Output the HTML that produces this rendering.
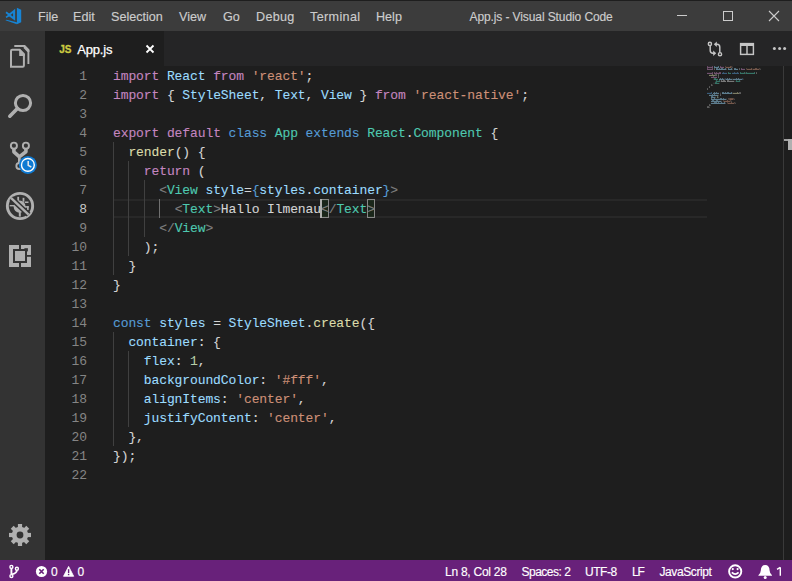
<!DOCTYPE html>
<html><head><meta charset="utf-8">
<style>
*{margin:0;padding:0;box-sizing:border-box}
html,body{width:792px;height:581px;overflow:hidden;background:#1e1e1e;font-family:"Liberation Sans",sans-serif}
#title{position:absolute;left:0;top:0;width:792px;height:31px;background:#3c3c3c;border-top:1px solid #1e1e1e}
.menu{position:absolute;top:8.5px;font-size:12.6px;color:#cccccc;line-height:15px;white-space:nowrap;-webkit-text-stroke:0.15px #cccccc}
#wtitle{position:absolute;top:8.5px;left:469.5px;font-size:12px;letter-spacing:-0.1px;color:#cccccc;line-height:15px;white-space:nowrap;-webkit-text-stroke:0.15px #cccccc}
#act{position:absolute;left:0;top:31px;width:45px;height:529px;background:#333333}
#tabs{position:absolute;left:45px;top:31px;width:747px;height:35px;background:#252526}
#tab{position:absolute;left:45px;top:31px;width:119px;height:35px;background:#1e1e1e}
#status{position:absolute;left:0;top:560px;width:792px;height:21px;background:#68217a;color:#fff;font-size:12px}
.st{position:absolute;top:4.5px;line-height:15px;white-space:nowrap;-webkit-text-stroke:0.15px #ffffff}
.ln{position:absolute;left:113px;height:19px;line-height:19px;font-family:"Liberation Mono",monospace;font-size:13px;letter-spacing:-0.1px;white-space:pre;color:#d4d4d4;-webkit-text-stroke:0.1px currentColor}
.num{position:absolute;left:50px;width:37px;text-align:right;height:19px;line-height:19px;font-family:"Liberation Mono",monospace;font-size:13px;letter-spacing:-0.1px;color:#858585}
.num.act{color:#c6c6c6}
.guide{position:absolute;width:1px}
#curline{position:absolute;left:113px;top:199px;width:594px;height:19px;border-top:2px solid #282828;border-bottom:2px solid #282828}
#cursor{position:absolute;left:320px;top:199px;width:2px;height:19px;background:#aeafad}
.bm{position:absolute;top:199px;width:9px;height:19px;border:1px solid #888888;background:rgba(0,100,0,0.12)}
</style></head><body>
<div id="title">
  <svg style="position:absolute;left:0;top:-1px" width="30" height="31" viewBox="0 0 30 31">
    <path fill="#1784d4" d="M16.9 7.8 L21.2 9.7 V22.3 L16.9 24.2 Z"/>
    <path fill="#1784d4" d="M5.4 20.3 L6.6 19.8 L16.9 22.3 V24.2 Z"/>
    <path fill="none" stroke="#1784d4" stroke-width="2.1" stroke-linejoin="miter" d="M14.1 11 L9 15 L14.1 18.7 Z"/>
    <path fill="none" stroke="#1784d4" stroke-width="1.7" d="M6 12.2 L9.4 14.8 M6 17.4 L9.4 15.2"/>
  </svg>
  <div class="menu" style="left:38px">File</div>
  <div class="menu" style="left:73px">Edit</div>
  <div class="menu" style="left:111px">Selection</div>
  <div class="menu" style="left:179px">View</div>
  <div class="menu" style="left:223px">Go</div>
  <div class="menu" style="left:256px;letter-spacing:0.3px">Debug</div>
  <div class="menu" style="left:310px;letter-spacing:0.35px">Terminal</div>
  <div class="menu" style="left:376px">Help</div>
  <div id="wtitle">App.js - Visual Studio Code</div>
  <svg style="position:absolute;left:0;top:-1px" width="792" height="31" viewBox="0 0 792 31">
    <rect x="677" y="15" width="10" height="1" fill="#cccccc"/>
    <rect x="723.5" y="11.5" width="9" height="9" fill="none" stroke="#cccccc" stroke-width="1"/>
    <path d="M769 11 L779 21 M779 11 L769 21" stroke="#cccccc" stroke-width="1.1"/>
  </svg>
</div>
<div id="act"></div>
<svg style="position:absolute;left:0;top:0" width="45" height="560" viewBox="0 0 45 560">
  <g fill="none" stroke="#b0b0b0">
    <!-- explorer -->
    <path d="M14.3 46 H24.5 L28.4 50 V64" stroke-width="1.9"/>
    <path d="M11 66.8 V51 Q11 49.8 12.2 49.8 H19.6 L23.9 54.2 V65.6 Q23.9 66.8 22.7 66.8 Z" stroke-width="2"/>
    <!-- search -->
    <circle cx="23" cy="103" r="7.6" stroke-width="3"/>
    <path d="M17.4 108.6 L9.8 116.2" stroke-width="3.6" stroke-linecap="round"/>
    <!-- git -->
    <circle cx="13.9" cy="145.7" r="3.05" stroke-width="1.9"/>
    <circle cx="25.9" cy="145.7" r="3.05" stroke-width="1.9"/>
    <circle cx="19.4" cy="166" r="3.05" stroke-width="1.9"/>
    <path d="M13.9 148.8 V151.8 L19.2 156.6 M25.9 148.8 V151.8 L19.6 156.6" stroke-width="3.6" stroke-linejoin="round"/>
    <path d="M19.4 155 V163" stroke-width="2.8"/>
    <!-- debug -->
    <circle cx="20" cy="206" r="12.65" stroke-width="2.9"/>
  </g>
  <path fill="#b0b0b0" d="M19.2 49.4 H20.4 L24.8 54.2 V56 H19.2 Z"/>
  <path fill="#b0b0b0" d="M24.6 45 L29.4 50 V52 L27.4 52 L23.5 47.9 Z"/>
  <!-- badge -->
  <circle cx="27.9" cy="164.9" r="9" fill="#0e7ad3"/>
  <circle cx="27.9" cy="164.9" r="6.4" fill="none" stroke="#ffffff" stroke-width="1.4"/>
  <path d="M28.2 161 V165.4 L31.3 167" fill="none" stroke="#e8e8e8" stroke-width="1.5"/>
  <!-- debug bug -->
  <g fill="#b0b0b0">
    <ellipse cx="19.6" cy="206.6" rx="6" ry="6.2"/>
    <rect x="17.3" y="196.8" width="1.8" height="4"/>
    <rect x="22.6" y="197.8" width="1.8" height="4"/>
    <rect x="25" y="201.5" width="3.5" height="1.5"/>
    <rect x="24" y="206.1" width="4.7" height="1.6"/>
    <rect x="27" y="206.1" width="1.7" height="4"/>
    <rect x="9.7" y="205" width="5" height="1.4"/>
    <rect x="18.8" y="211.6" width="2" height="5"/>
  </g>
  <path d="M11.2 198.2 L28.6 214.6" stroke="#333333" stroke-width="5.4"/>
  <path d="M11.2 198.2 L28.6 214.6" stroke="#b0b0b0" stroke-width="2.4"/>
  <!-- extensions -->
  <rect x="9" y="245" width="22" height="22" fill="#b0b0b0"/>
  <g fill="#333333">
    <rect x="19" y="245" width="2" height="4"/>
    <rect x="19" y="263" width="2" height="4"/>
    <rect x="27" y="255" width="4" height="1.8"/>
    <rect x="13" y="249" width="14" height="14"/>
    <rect x="24.4" y="248.2" width="3.5" height="3.2"/>
  </g>
  <rect x="15" y="251" width="10" height="10" fill="#b0b0b0"/>
  <!-- gear -->
  <g fill="#b0b0b0" transform="translate(20 535)">
    <circle r="8.2"/>
    <rect x="-2.1" y="-11" width="4.2" height="22"/>
    <rect x="-2.1" y="-11" width="4.2" height="22" transform="rotate(45)"/>
    <rect x="-2.1" y="-11" width="4.2" height="22" transform="rotate(90)"/>
    <rect x="-2.1" y="-11" width="4.2" height="22" transform="rotate(135)"/>
    <circle r="3.4" fill="#333333"/>
  </g>
</svg>
<div id="tabs"></div>
<div id="tab">
  <div style="position:absolute;left:14.3px;top:13px;font-weight:bold;font-size:10px;color:#cbcb41;letter-spacing:-0.2px;line-height:12px;-webkit-text-stroke:0.3px #cbcb41">JS</div>
  <div style="position:absolute;left:32.3px;top:10.7px;font-size:13px;color:#ffffff;line-height:15px;letter-spacing:-0.2px;-webkit-text-stroke:0.25px #ffffff">App.js</div>
  <svg style="position:absolute;left:100px;top:13px" width="10" height="10" viewBox="0 0 10 10"><path d="M1.5 1.5 L8.5 8.5 M8.5 1.5 L1.5 8.5" stroke="#ffffff" stroke-width="1.8"/></svg>
</div>
<svg style="position:absolute;left:0;top:0" width="792" height="66" viewBox="0 0 792 66">
  <g fill="none" stroke="#c5c5c5" stroke-width="1.45">
    <circle cx="709.9" cy="43.9" r="1.6"/>
    <circle cx="720" cy="54.2" r="1.6"/>
    <path d="M710.2 45.5 V50.5 Q710.2 53.2 713 53.2 H714.5"/>
    <path d="M719.8 52.6 V47 Q719.8 44.2 717 44.2 H716"/>
    <rect x="740.6" y="43.6" width="12.8" height="10.8"/>
    <path d="M747 44 V54"/>
  </g>
  <path d="M713.2 50.6 L716.2 53.3 L713.2 56 Z" fill="#c5c5c5"/>
  <path d="M716.8 41.5 L713.8 44.2 L716.8 46.9 Z" fill="#c5c5c5"/>
  <rect x="740" y="43" width="14" height="3" fill="#c5c5c5"/>
  <circle cx="774.4" cy="48.4" r="1.5" fill="#c5c5c5"/>
  <circle cx="779.6" cy="48.4" r="1.5" fill="#c5c5c5"/>
  <circle cx="784.6" cy="48.4" r="1.5" fill="#c5c5c5"/>
</svg>
<div id="curline"></div>
<div class="bm" style="left:320px"></div>
<div class="bm" style="left:367px;width:8px"></div>
<div class="guide" style="left:113px;top:142px;height:133px;background:#404040"></div>
<div class="guide" style="left:128px;top:161px;height:95px;background:#404040"></div>
<div class="guide" style="left:144px;top:180px;height:57px;background:#404040"></div>
<div class="guide" style="left:159px;top:199px;height:19px;background:#707070"></div>
<div class="guide" style="left:113px;top:332px;height:114px;background:#404040"></div>
<div class="guide" style="left:128px;top:351px;height:76px;background:#404040"></div>
<div class="ln" style="top:67px"><span style="color:#c586c0">import</span><span style="color:#d4d4d4"> </span><span style="color:#9cdcfe">React</span><span style="color:#d4d4d4"> </span><span style="color:#c586c0">from</span><span style="color:#d4d4d4"> </span><span style="color:#ce9178">&#x27;react&#x27;</span><span style="color:#d4d4d4">;</span></div>
<div class="num" style="top:67px">1</div>
<div class="ln" style="top:86px"><span style="color:#c586c0">import</span><span style="color:#d4d4d4"> { </span><span style="color:#9cdcfe">StyleSheet</span><span style="color:#d4d4d4">, </span><span style="color:#9cdcfe">Text</span><span style="color:#d4d4d4">, </span><span style="color:#9cdcfe">View</span><span style="color:#d4d4d4"> } </span><span style="color:#c586c0">from</span><span style="color:#d4d4d4"> </span><span style="color:#ce9178">&#x27;react-native&#x27;</span><span style="color:#d4d4d4">;</span></div>
<div class="num" style="top:86px">2</div>
<div class="ln" style="top:105px"></div>
<div class="num" style="top:105px">3</div>
<div class="ln" style="top:124px"><span style="color:#c586c0">export</span><span style="color:#d4d4d4"> </span><span style="color:#c586c0">default</span><span style="color:#d4d4d4"> </span><span style="color:#569cd6">class</span><span style="color:#d4d4d4"> </span><span style="color:#4ec9b0">App</span><span style="color:#d4d4d4"> </span><span style="color:#569cd6">extends</span><span style="color:#d4d4d4"> </span><span style="color:#4ec9b0">React</span><span style="color:#d4d4d4">.</span><span style="color:#4ec9b0">Component</span><span style="color:#d4d4d4"> {</span></div>
<div class="num" style="top:124px">4</div>
<div class="ln" style="top:143px"><span style="color:#d4d4d4">  </span><span style="color:#dcdcaa">render</span><span style="color:#d4d4d4">() {</span></div>
<div class="num" style="top:143px">5</div>
<div class="ln" style="top:162px"><span style="color:#d4d4d4">    </span><span style="color:#c586c0">return</span><span style="color:#d4d4d4"> (</span></div>
<div class="num" style="top:162px">6</div>
<div class="ln" style="top:181px"><span style="color:#d4d4d4">      </span><span style="color:#808080">&lt;</span><span style="color:#4ec9b0">View</span><span style="color:#d4d4d4"> </span><span style="color:#9cdcfe">style</span><span style="color:#d4d4d4">=</span><span style="color:#569cd6">{</span><span style="color:#9cdcfe">styles</span><span style="color:#d4d4d4">.</span><span style="color:#9cdcfe">container</span><span style="color:#569cd6">}</span><span style="color:#808080">&gt;</span></div>
<div class="num" style="top:181px">7</div>
<div class="ln" style="top:200px"><span style="color:#d4d4d4">        </span><span style="color:#808080">&lt;</span><span style="color:#4ec9b0">Text</span><span style="color:#808080">&gt;</span><span style="color:#d4d4d4">Hallo Ilmenau</span><span style="color:#808080">&lt;/</span><span style="color:#4ec9b0">Text</span><span style="color:#808080">&gt;</span></div>
<div class="num act" style="top:200px">8</div>
<div class="ln" style="top:219px"><span style="color:#d4d4d4">      </span><span style="color:#808080">&lt;/</span><span style="color:#4ec9b0">View</span><span style="color:#808080">&gt;</span></div>
<div class="num" style="top:219px">9</div>
<div class="ln" style="top:238px"><span style="color:#d4d4d4">    );</span></div>
<div class="num" style="top:238px">10</div>
<div class="ln" style="top:257px"><span style="color:#d4d4d4">  }</span></div>
<div class="num" style="top:257px">11</div>
<div class="ln" style="top:276px"><span style="color:#d4d4d4">}</span></div>
<div class="num" style="top:276px">12</div>
<div class="ln" style="top:295px"></div>
<div class="num" style="top:295px">13</div>
<div class="ln" style="top:314px"><span style="color:#569cd6">const</span><span style="color:#d4d4d4"> </span><span style="color:#9cdcfe">styles</span><span style="color:#d4d4d4"> = </span><span style="color:#9cdcfe">StyleSheet</span><span style="color:#d4d4d4">.</span><span style="color:#dcdcaa">create</span><span style="color:#d4d4d4">({</span></div>
<div class="num" style="top:314px">14</div>
<div class="ln" style="top:333px"><span style="color:#d4d4d4">  </span><span style="color:#9cdcfe">container</span><span style="color:#d4d4d4">: {</span></div>
<div class="num" style="top:333px">15</div>
<div class="ln" style="top:352px"><span style="color:#d4d4d4">    </span><span style="color:#9cdcfe">flex</span><span style="color:#d4d4d4">: </span><span style="color:#b5cea8">1</span><span style="color:#d4d4d4">,</span></div>
<div class="num" style="top:352px">16</div>
<div class="ln" style="top:371px"><span style="color:#d4d4d4">    </span><span style="color:#9cdcfe">backgroundColor</span><span style="color:#d4d4d4">: </span><span style="color:#ce9178">&#x27;#fff&#x27;</span><span style="color:#d4d4d4">,</span></div>
<div class="num" style="top:371px">17</div>
<div class="ln" style="top:390px"><span style="color:#d4d4d4">    </span><span style="color:#9cdcfe">alignItems</span><span style="color:#d4d4d4">: </span><span style="color:#ce9178">&#x27;center&#x27;</span><span style="color:#d4d4d4">,</span></div>
<div class="num" style="top:390px">18</div>
<div class="ln" style="top:409px"><span style="color:#d4d4d4">    </span><span style="color:#9cdcfe">justifyContent</span><span style="color:#d4d4d4">: </span><span style="color:#ce9178">&#x27;center&#x27;</span><span style="color:#d4d4d4">,</span></div>
<div class="num" style="top:409px">19</div>
<div class="ln" style="top:428px"><span style="color:#d4d4d4">  },</span></div>
<div class="num" style="top:428px">20</div>
<div class="ln" style="top:447px"><span style="color:#d4d4d4">});</span></div>
<div class="num" style="top:447px">21</div>
<div class="ln" style="top:466px"></div>
<div class="num" style="top:466px">22</div>
<svg class="mm" width="792" height="581" viewBox="0 0 792 581" style="position:absolute;left:0;top:0" shape-rendering="crispEdges"><rect x="707" y="66" width="1" height="1" fill="#c586c0" fill-opacity="0.42"/><rect x="707" y="67" width="1" height="1" fill="#c586c0" fill-opacity="0.50"/><rect x="708" y="66" width="1" height="1" fill="#c586c0" fill-opacity="0.08"/><rect x="708" y="67" width="1" height="1" fill="#c586c0" fill-opacity="0.50"/><rect x="709" y="66" width="1" height="1" fill="#c586c0" fill-opacity="0.08"/><rect x="709" y="67" width="1" height="1" fill="#c586c0" fill-opacity="0.50"/><rect x="710" y="66" width="1" height="1" fill="#c586c0" fill-opacity="0.08"/><rect x="710" y="67" width="1" height="1" fill="#c586c0" fill-opacity="0.50"/><rect x="711" y="66" width="1" height="1" fill="#c586c0" fill-opacity="0.08"/><rect x="711" y="67" width="1" height="1" fill="#c586c0" fill-opacity="0.50"/><rect x="712" y="66" width="1" height="1" fill="#c586c0" fill-opacity="0.42"/><rect x="712" y="67" width="1" height="1" fill="#c586c0" fill-opacity="0.50"/><rect x="714" y="66" width="1" height="1" fill="#9cdcfe" fill-opacity="0.42"/><rect x="714" y="67" width="1" height="1" fill="#9cdcfe" fill-opacity="0.50"/><rect x="715" y="66" width="1" height="1" fill="#9cdcfe" fill-opacity="0.08"/><rect x="715" y="67" width="1" height="1" fill="#9cdcfe" fill-opacity="0.50"/><rect x="716" y="66" width="1" height="1" fill="#9cdcfe" fill-opacity="0.08"/><rect x="716" y="67" width="1" height="1" fill="#9cdcfe" fill-opacity="0.50"/><rect x="717" y="66" width="1" height="1" fill="#9cdcfe" fill-opacity="0.08"/><rect x="717" y="67" width="1" height="1" fill="#9cdcfe" fill-opacity="0.50"/><rect x="718" y="66" width="1" height="1" fill="#9cdcfe" fill-opacity="0.42"/><rect x="718" y="67" width="1" height="1" fill="#9cdcfe" fill-opacity="0.50"/><rect x="720" y="66" width="1" height="1" fill="#c586c0" fill-opacity="0.42"/><rect x="720" y="67" width="1" height="1" fill="#c586c0" fill-opacity="0.50"/><rect x="721" y="66" width="1" height="1" fill="#c586c0" fill-opacity="0.08"/><rect x="721" y="67" width="1" height="1" fill="#c586c0" fill-opacity="0.50"/><rect x="722" y="66" width="1" height="1" fill="#c586c0" fill-opacity="0.08"/><rect x="722" y="67" width="1" height="1" fill="#c586c0" fill-opacity="0.50"/><rect x="723" y="66" width="1" height="1" fill="#c586c0" fill-opacity="0.08"/><rect x="723" y="67" width="1" height="1" fill="#c586c0" fill-opacity="0.50"/><rect x="725" y="66" width="1" height="1" fill="#ce9178" fill-opacity="0.30"/><rect x="725" y="67" width="1" height="1" fill="#ce9178" fill-opacity="0.22"/><rect x="726" y="66" width="1" height="1" fill="#ce9178" fill-opacity="0.08"/><rect x="726" y="67" width="1" height="1" fill="#ce9178" fill-opacity="0.50"/><rect x="727" y="66" width="1" height="1" fill="#ce9178" fill-opacity="0.08"/><rect x="727" y="67" width="1" height="1" fill="#ce9178" fill-opacity="0.50"/><rect x="728" y="66" width="1" height="1" fill="#ce9178" fill-opacity="0.08"/><rect x="728" y="67" width="1" height="1" fill="#ce9178" fill-opacity="0.50"/><rect x="729" y="66" width="1" height="1" fill="#ce9178" fill-opacity="0.08"/><rect x="729" y="67" width="1" height="1" fill="#ce9178" fill-opacity="0.50"/><rect x="730" y="66" width="1" height="1" fill="#ce9178" fill-opacity="0.42"/><rect x="730" y="67" width="1" height="1" fill="#ce9178" fill-opacity="0.50"/><rect x="731" y="66" width="1" height="1" fill="#ce9178" fill-opacity="0.30"/><rect x="731" y="67" width="1" height="1" fill="#ce9178" fill-opacity="0.22"/><rect x="732" y="66" width="1" height="1" fill="#d4d4d4" fill-opacity="0.08"/><rect x="732" y="67" width="1" height="1" fill="#d4d4d4" fill-opacity="0.22"/><rect x="707" y="68" width="1" height="1" fill="#c586c0" fill-opacity="0.42"/><rect x="707" y="69" width="1" height="1" fill="#c586c0" fill-opacity="0.50"/><rect x="708" y="68" width="1" height="1" fill="#c586c0" fill-opacity="0.08"/><rect x="708" y="69" width="1" height="1" fill="#c586c0" fill-opacity="0.50"/><rect x="709" y="68" width="1" height="1" fill="#c586c0" fill-opacity="0.08"/><rect x="709" y="69" width="1" height="1" fill="#c586c0" fill-opacity="0.50"/><rect x="710" y="68" width="1" height="1" fill="#c586c0" fill-opacity="0.08"/><rect x="710" y="69" width="1" height="1" fill="#c586c0" fill-opacity="0.50"/><rect x="711" y="68" width="1" height="1" fill="#c586c0" fill-opacity="0.08"/><rect x="711" y="69" width="1" height="1" fill="#c586c0" fill-opacity="0.50"/><rect x="712" y="68" width="1" height="1" fill="#c586c0" fill-opacity="0.42"/><rect x="712" y="69" width="1" height="1" fill="#c586c0" fill-opacity="0.50"/><rect x="714" y="68" width="1" height="1" fill="#d4d4d4" fill-opacity="0.30"/><rect x="714" y="69" width="1" height="1" fill="#d4d4d4" fill-opacity="0.35"/><rect x="716" y="68" width="1" height="1" fill="#9cdcfe" fill-opacity="0.42"/><rect x="716" y="69" width="1" height="1" fill="#9cdcfe" fill-opacity="0.50"/><rect x="717" y="68" width="1" height="1" fill="#9cdcfe" fill-opacity="0.42"/><rect x="717" y="69" width="1" height="1" fill="#9cdcfe" fill-opacity="0.50"/><rect x="718" y="68" width="1" height="1" fill="#9cdcfe" fill-opacity="0.08"/><rect x="718" y="69" width="1" height="1" fill="#9cdcfe" fill-opacity="0.50"/><rect x="719" y="68" width="1" height="1" fill="#9cdcfe" fill-opacity="0.42"/><rect x="719" y="69" width="1" height="1" fill="#9cdcfe" fill-opacity="0.50"/><rect x="720" y="68" width="1" height="1" fill="#9cdcfe" fill-opacity="0.08"/><rect x="720" y="69" width="1" height="1" fill="#9cdcfe" fill-opacity="0.50"/><rect x="721" y="68" width="1" height="1" fill="#9cdcfe" fill-opacity="0.42"/><rect x="721" y="69" width="1" height="1" fill="#9cdcfe" fill-opacity="0.50"/><rect x="722" y="68" width="1" height="1" fill="#9cdcfe" fill-opacity="0.42"/><rect x="722" y="69" width="1" height="1" fill="#9cdcfe" fill-opacity="0.50"/><rect x="723" y="68" width="1" height="1" fill="#9cdcfe" fill-opacity="0.08"/><rect x="723" y="69" width="1" height="1" fill="#9cdcfe" fill-opacity="0.50"/><rect x="724" y="68" width="1" height="1" fill="#9cdcfe" fill-opacity="0.08"/><rect x="724" y="69" width="1" height="1" fill="#9cdcfe" fill-opacity="0.50"/><rect x="725" y="68" width="1" height="1" fill="#9cdcfe" fill-opacity="0.42"/><rect x="725" y="69" width="1" height="1" fill="#9cdcfe" fill-opacity="0.50"/><rect x="726" y="68" width="1" height="1" fill="#d4d4d4" fill-opacity="0.08"/><rect x="726" y="69" width="1" height="1" fill="#d4d4d4" fill-opacity="0.22"/><rect x="728" y="68" width="1" height="1" fill="#9cdcfe" fill-opacity="0.42"/><rect x="728" y="69" width="1" height="1" fill="#9cdcfe" fill-opacity="0.50"/><rect x="729" y="68" width="1" height="1" fill="#9cdcfe" fill-opacity="0.08"/><rect x="729" y="69" width="1" height="1" fill="#9cdcfe" fill-opacity="0.50"/><rect x="730" y="68" width="1" height="1" fill="#9cdcfe" fill-opacity="0.08"/><rect x="730" y="69" width="1" height="1" fill="#9cdcfe" fill-opacity="0.50"/><rect x="731" y="68" width="1" height="1" fill="#9cdcfe" fill-opacity="0.42"/><rect x="731" y="69" width="1" height="1" fill="#9cdcfe" fill-opacity="0.50"/><rect x="732" y="68" width="1" height="1" fill="#d4d4d4" fill-opacity="0.08"/><rect x="732" y="69" width="1" height="1" fill="#d4d4d4" fill-opacity="0.22"/><rect x="734" y="68" width="1" height="1" fill="#9cdcfe" fill-opacity="0.42"/><rect x="734" y="69" width="1" height="1" fill="#9cdcfe" fill-opacity="0.50"/><rect x="735" y="68" width="1" height="1" fill="#9cdcfe" fill-opacity="0.42"/><rect x="735" y="69" width="1" height="1" fill="#9cdcfe" fill-opacity="0.50"/><rect x="736" y="68" width="1" height="1" fill="#9cdcfe" fill-opacity="0.08"/><rect x="736" y="69" width="1" height="1" fill="#9cdcfe" fill-opacity="0.50"/><rect x="737" y="68" width="1" height="1" fill="#9cdcfe" fill-opacity="0.08"/><rect x="737" y="69" width="1" height="1" fill="#9cdcfe" fill-opacity="0.50"/><rect x="739" y="68" width="1" height="1" fill="#d4d4d4" fill-opacity="0.30"/><rect x="739" y="69" width="1" height="1" fill="#d4d4d4" fill-opacity="0.35"/><rect x="741" y="68" width="1" height="1" fill="#c586c0" fill-opacity="0.42"/><rect x="741" y="69" width="1" height="1" fill="#c586c0" fill-opacity="0.50"/><rect x="742" y="68" width="1" height="1" fill="#c586c0" fill-opacity="0.08"/><rect x="742" y="69" width="1" height="1" fill="#c586c0" fill-opacity="0.50"/><rect x="743" y="68" width="1" height="1" fill="#c586c0" fill-opacity="0.08"/><rect x="743" y="69" width="1" height="1" fill="#c586c0" fill-opacity="0.50"/><rect x="744" y="68" width="1" height="1" fill="#c586c0" fill-opacity="0.08"/><rect x="744" y="69" width="1" height="1" fill="#c586c0" fill-opacity="0.50"/><rect x="746" y="68" width="1" height="1" fill="#ce9178" fill-opacity="0.30"/><rect x="746" y="69" width="1" height="1" fill="#ce9178" fill-opacity="0.22"/><rect x="747" y="68" width="1" height="1" fill="#ce9178" fill-opacity="0.08"/><rect x="747" y="69" width="1" height="1" fill="#ce9178" fill-opacity="0.50"/><rect x="748" y="68" width="1" height="1" fill="#ce9178" fill-opacity="0.08"/><rect x="748" y="69" width="1" height="1" fill="#ce9178" fill-opacity="0.50"/><rect x="749" y="68" width="1" height="1" fill="#ce9178" fill-opacity="0.08"/><rect x="749" y="69" width="1" height="1" fill="#ce9178" fill-opacity="0.50"/><rect x="750" y="68" width="1" height="1" fill="#ce9178" fill-opacity="0.08"/><rect x="750" y="69" width="1" height="1" fill="#ce9178" fill-opacity="0.50"/><rect x="751" y="68" width="1" height="1" fill="#ce9178" fill-opacity="0.42"/><rect x="751" y="69" width="1" height="1" fill="#ce9178" fill-opacity="0.50"/><rect x="752" y="68" width="1" height="1" fill="#ce9178" fill-opacity="0.08"/><rect x="752" y="69" width="1" height="1" fill="#ce9178" fill-opacity="0.22"/><rect x="753" y="68" width="1" height="1" fill="#ce9178" fill-opacity="0.08"/><rect x="753" y="69" width="1" height="1" fill="#ce9178" fill-opacity="0.50"/><rect x="754" y="68" width="1" height="1" fill="#ce9178" fill-opacity="0.08"/><rect x="754" y="69" width="1" height="1" fill="#ce9178" fill-opacity="0.50"/><rect x="755" y="68" width="1" height="1" fill="#ce9178" fill-opacity="0.42"/><rect x="755" y="69" width="1" height="1" fill="#ce9178" fill-opacity="0.50"/><rect x="756" y="68" width="1" height="1" fill="#ce9178" fill-opacity="0.42"/><rect x="756" y="69" width="1" height="1" fill="#ce9178" fill-opacity="0.50"/><rect x="757" y="68" width="1" height="1" fill="#ce9178" fill-opacity="0.08"/><rect x="757" y="69" width="1" height="1" fill="#ce9178" fill-opacity="0.50"/><rect x="758" y="68" width="1" height="1" fill="#ce9178" fill-opacity="0.08"/><rect x="758" y="69" width="1" height="1" fill="#ce9178" fill-opacity="0.50"/><rect x="759" y="68" width="1" height="1" fill="#ce9178" fill-opacity="0.30"/><rect x="759" y="69" width="1" height="1" fill="#ce9178" fill-opacity="0.22"/><rect x="760" y="68" width="1" height="1" fill="#d4d4d4" fill-opacity="0.08"/><rect x="760" y="69" width="1" height="1" fill="#d4d4d4" fill-opacity="0.22"/><rect x="707" y="72" width="1" height="1" fill="#c586c0" fill-opacity="0.08"/><rect x="707" y="73" width="1" height="1" fill="#c586c0" fill-opacity="0.50"/><rect x="708" y="72" width="1" height="1" fill="#c586c0" fill-opacity="0.08"/><rect x="708" y="73" width="1" height="1" fill="#c586c0" fill-opacity="0.50"/><rect x="709" y="72" width="1" height="1" fill="#c586c0" fill-opacity="0.08"/><rect x="709" y="73" width="1" height="1" fill="#c586c0" fill-opacity="0.50"/><rect x="710" y="72" width="1" height="1" fill="#c586c0" fill-opacity="0.08"/><rect x="710" y="73" width="1" height="1" fill="#c586c0" fill-opacity="0.50"/><rect x="711" y="72" width="1" height="1" fill="#c586c0" fill-opacity="0.08"/><rect x="711" y="73" width="1" height="1" fill="#c586c0" fill-opacity="0.50"/><rect x="712" y="72" width="1" height="1" fill="#c586c0" fill-opacity="0.42"/><rect x="712" y="73" width="1" height="1" fill="#c586c0" fill-opacity="0.50"/><rect x="714" y="72" width="1" height="1" fill="#c586c0" fill-opacity="0.42"/><rect x="714" y="73" width="1" height="1" fill="#c586c0" fill-opacity="0.50"/><rect x="715" y="72" width="1" height="1" fill="#c586c0" fill-opacity="0.08"/><rect x="715" y="73" width="1" height="1" fill="#c586c0" fill-opacity="0.50"/><rect x="716" y="72" width="1" height="1" fill="#c586c0" fill-opacity="0.42"/><rect x="716" y="73" width="1" height="1" fill="#c586c0" fill-opacity="0.50"/><rect x="717" y="72" width="1" height="1" fill="#c586c0" fill-opacity="0.08"/><rect x="717" y="73" width="1" height="1" fill="#c586c0" fill-opacity="0.50"/><rect x="718" y="72" width="1" height="1" fill="#c586c0" fill-opacity="0.08"/><rect x="718" y="73" width="1" height="1" fill="#c586c0" fill-opacity="0.50"/><rect x="719" y="72" width="1" height="1" fill="#c586c0" fill-opacity="0.42"/><rect x="719" y="73" width="1" height="1" fill="#c586c0" fill-opacity="0.50"/><rect x="720" y="72" width="1" height="1" fill="#c586c0" fill-opacity="0.42"/><rect x="720" y="73" width="1" height="1" fill="#c586c0" fill-opacity="0.50"/><rect x="722" y="72" width="1" height="1" fill="#569cd6" fill-opacity="0.08"/><rect x="722" y="73" width="1" height="1" fill="#569cd6" fill-opacity="0.50"/><rect x="723" y="72" width="1" height="1" fill="#569cd6" fill-opacity="0.42"/><rect x="723" y="73" width="1" height="1" fill="#569cd6" fill-opacity="0.50"/><rect x="724" y="72" width="1" height="1" fill="#569cd6" fill-opacity="0.08"/><rect x="724" y="73" width="1" height="1" fill="#569cd6" fill-opacity="0.50"/><rect x="725" y="72" width="1" height="1" fill="#569cd6" fill-opacity="0.08"/><rect x="725" y="73" width="1" height="1" fill="#569cd6" fill-opacity="0.50"/><rect x="726" y="72" width="1" height="1" fill="#569cd6" fill-opacity="0.08"/><rect x="726" y="73" width="1" height="1" fill="#569cd6" fill-opacity="0.50"/><rect x="728" y="72" width="1" height="1" fill="#4ec9b0" fill-opacity="0.42"/><rect x="728" y="73" width="1" height="1" fill="#4ec9b0" fill-opacity="0.50"/><rect x="729" y="72" width="1" height="1" fill="#4ec9b0" fill-opacity="0.08"/><rect x="729" y="73" width="1" height="1" fill="#4ec9b0" fill-opacity="0.50"/><rect x="730" y="72" width="1" height="1" fill="#4ec9b0" fill-opacity="0.08"/><rect x="730" y="73" width="1" height="1" fill="#4ec9b0" fill-opacity="0.50"/><rect x="732" y="72" width="1" height="1" fill="#569cd6" fill-opacity="0.08"/><rect x="732" y="73" width="1" height="1" fill="#569cd6" fill-opacity="0.50"/><rect x="733" y="72" width="1" height="1" fill="#569cd6" fill-opacity="0.08"/><rect x="733" y="73" width="1" height="1" fill="#569cd6" fill-opacity="0.50"/><rect x="734" y="72" width="1" height="1" fill="#569cd6" fill-opacity="0.42"/><rect x="734" y="73" width="1" height="1" fill="#569cd6" fill-opacity="0.50"/><rect x="735" y="72" width="1" height="1" fill="#569cd6" fill-opacity="0.08"/><rect x="735" y="73" width="1" height="1" fill="#569cd6" fill-opacity="0.50"/><rect x="736" y="72" width="1" height="1" fill="#569cd6" fill-opacity="0.08"/><rect x="736" y="73" width="1" height="1" fill="#569cd6" fill-opacity="0.50"/><rect x="737" y="72" width="1" height="1" fill="#569cd6" fill-opacity="0.42"/><rect x="737" y="73" width="1" height="1" fill="#569cd6" fill-opacity="0.50"/><rect x="738" y="72" width="1" height="1" fill="#569cd6" fill-opacity="0.08"/><rect x="738" y="73" width="1" height="1" fill="#569cd6" fill-opacity="0.50"/><rect x="740" y="72" width="1" height="1" fill="#4ec9b0" fill-opacity="0.42"/><rect x="740" y="73" width="1" height="1" fill="#4ec9b0" fill-opacity="0.50"/><rect x="741" y="72" width="1" height="1" fill="#4ec9b0" fill-opacity="0.08"/><rect x="741" y="73" width="1" height="1" fill="#4ec9b0" fill-opacity="0.50"/><rect x="742" y="72" width="1" height="1" fill="#4ec9b0" fill-opacity="0.08"/><rect x="742" y="73" width="1" height="1" fill="#4ec9b0" fill-opacity="0.50"/><rect x="743" y="72" width="1" height="1" fill="#4ec9b0" fill-opacity="0.08"/><rect x="743" y="73" width="1" height="1" fill="#4ec9b0" fill-opacity="0.50"/><rect x="744" y="72" width="1" height="1" fill="#4ec9b0" fill-opacity="0.42"/><rect x="744" y="73" width="1" height="1" fill="#4ec9b0" fill-opacity="0.50"/><rect x="745" y="72" width="1" height="1" fill="#d4d4d4" fill-opacity="0.08"/><rect x="745" y="73" width="1" height="1" fill="#d4d4d4" fill-opacity="0.22"/><rect x="746" y="72" width="1" height="1" fill="#4ec9b0" fill-opacity="0.42"/><rect x="746" y="73" width="1" height="1" fill="#4ec9b0" fill-opacity="0.50"/><rect x="747" y="72" width="1" height="1" fill="#4ec9b0" fill-opacity="0.08"/><rect x="747" y="73" width="1" height="1" fill="#4ec9b0" fill-opacity="0.50"/><rect x="748" y="72" width="1" height="1" fill="#4ec9b0" fill-opacity="0.08"/><rect x="748" y="73" width="1" height="1" fill="#4ec9b0" fill-opacity="0.50"/><rect x="749" y="72" width="1" height="1" fill="#4ec9b0" fill-opacity="0.08"/><rect x="749" y="73" width="1" height="1" fill="#4ec9b0" fill-opacity="0.50"/><rect x="750" y="72" width="1" height="1" fill="#4ec9b0" fill-opacity="0.08"/><rect x="750" y="73" width="1" height="1" fill="#4ec9b0" fill-opacity="0.50"/><rect x="751" y="72" width="1" height="1" fill="#4ec9b0" fill-opacity="0.08"/><rect x="751" y="73" width="1" height="1" fill="#4ec9b0" fill-opacity="0.50"/><rect x="752" y="72" width="1" height="1" fill="#4ec9b0" fill-opacity="0.08"/><rect x="752" y="73" width="1" height="1" fill="#4ec9b0" fill-opacity="0.50"/><rect x="753" y="72" width="1" height="1" fill="#4ec9b0" fill-opacity="0.08"/><rect x="753" y="73" width="1" height="1" fill="#4ec9b0" fill-opacity="0.50"/><rect x="754" y="72" width="1" height="1" fill="#4ec9b0" fill-opacity="0.42"/><rect x="754" y="73" width="1" height="1" fill="#4ec9b0" fill-opacity="0.50"/><rect x="756" y="72" width="1" height="1" fill="#d4d4d4" fill-opacity="0.30"/><rect x="756" y="73" width="1" height="1" fill="#d4d4d4" fill-opacity="0.35"/><rect x="709" y="74" width="1" height="1" fill="#dcdcaa" fill-opacity="0.08"/><rect x="709" y="75" width="1" height="1" fill="#dcdcaa" fill-opacity="0.50"/><rect x="710" y="74" width="1" height="1" fill="#dcdcaa" fill-opacity="0.08"/><rect x="710" y="75" width="1" height="1" fill="#dcdcaa" fill-opacity="0.50"/><rect x="711" y="74" width="1" height="1" fill="#dcdcaa" fill-opacity="0.08"/><rect x="711" y="75" width="1" height="1" fill="#dcdcaa" fill-opacity="0.50"/><rect x="712" y="74" width="1" height="1" fill="#dcdcaa" fill-opacity="0.42"/><rect x="712" y="75" width="1" height="1" fill="#dcdcaa" fill-opacity="0.50"/><rect x="713" y="74" width="1" height="1" fill="#dcdcaa" fill-opacity="0.08"/><rect x="713" y="75" width="1" height="1" fill="#dcdcaa" fill-opacity="0.50"/><rect x="714" y="74" width="1" height="1" fill="#dcdcaa" fill-opacity="0.08"/><rect x="714" y="75" width="1" height="1" fill="#dcdcaa" fill-opacity="0.50"/><rect x="715" y="74" width="1" height="1" fill="#d4d4d4" fill-opacity="0.30"/><rect x="715" y="75" width="1" height="1" fill="#d4d4d4" fill-opacity="0.35"/><rect x="716" y="74" width="1" height="1" fill="#d4d4d4" fill-opacity="0.30"/><rect x="716" y="75" width="1" height="1" fill="#d4d4d4" fill-opacity="0.35"/><rect x="718" y="74" width="1" height="1" fill="#d4d4d4" fill-opacity="0.30"/><rect x="718" y="75" width="1" height="1" fill="#d4d4d4" fill-opacity="0.35"/><rect x="711" y="76" width="1" height="1" fill="#c586c0" fill-opacity="0.08"/><rect x="711" y="77" width="1" height="1" fill="#c586c0" fill-opacity="0.50"/><rect x="712" y="76" width="1" height="1" fill="#c586c0" fill-opacity="0.08"/><rect x="712" y="77" width="1" height="1" fill="#c586c0" fill-opacity="0.50"/><rect x="713" y="76" width="1" height="1" fill="#c586c0" fill-opacity="0.42"/><rect x="713" y="77" width="1" height="1" fill="#c586c0" fill-opacity="0.50"/><rect x="714" y="76" width="1" height="1" fill="#c586c0" fill-opacity="0.08"/><rect x="714" y="77" width="1" height="1" fill="#c586c0" fill-opacity="0.50"/><rect x="715" y="76" width="1" height="1" fill="#c586c0" fill-opacity="0.08"/><rect x="715" y="77" width="1" height="1" fill="#c586c0" fill-opacity="0.50"/><rect x="716" y="76" width="1" height="1" fill="#c586c0" fill-opacity="0.08"/><rect x="716" y="77" width="1" height="1" fill="#c586c0" fill-opacity="0.50"/><rect x="718" y="76" width="1" height="1" fill="#d4d4d4" fill-opacity="0.30"/><rect x="718" y="77" width="1" height="1" fill="#d4d4d4" fill-opacity="0.35"/><rect x="713" y="78" width="1" height="1" fill="#808080" fill-opacity="0.08"/><rect x="713" y="79" width="1" height="1" fill="#808080" fill-opacity="0.22"/><rect x="714" y="78" width="1" height="1" fill="#4ec9b0" fill-opacity="0.42"/><rect x="714" y="79" width="1" height="1" fill="#4ec9b0" fill-opacity="0.50"/><rect x="715" y="78" width="1" height="1" fill="#4ec9b0" fill-opacity="0.42"/><rect x="715" y="79" width="1" height="1" fill="#4ec9b0" fill-opacity="0.50"/><rect x="716" y="78" width="1" height="1" fill="#4ec9b0" fill-opacity="0.08"/><rect x="716" y="79" width="1" height="1" fill="#4ec9b0" fill-opacity="0.50"/><rect x="717" y="78" width="1" height="1" fill="#4ec9b0" fill-opacity="0.08"/><rect x="717" y="79" width="1" height="1" fill="#4ec9b0" fill-opacity="0.50"/><rect x="719" y="78" width="1" height="1" fill="#9cdcfe" fill-opacity="0.08"/><rect x="719" y="79" width="1" height="1" fill="#9cdcfe" fill-opacity="0.50"/><rect x="720" y="78" width="1" height="1" fill="#9cdcfe" fill-opacity="0.42"/><rect x="720" y="79" width="1" height="1" fill="#9cdcfe" fill-opacity="0.50"/><rect x="721" y="78" width="1" height="1" fill="#9cdcfe" fill-opacity="0.08"/><rect x="721" y="79" width="1" height="1" fill="#9cdcfe" fill-opacity="0.50"/><rect x="722" y="78" width="1" height="1" fill="#9cdcfe" fill-opacity="0.42"/><rect x="722" y="79" width="1" height="1" fill="#9cdcfe" fill-opacity="0.50"/><rect x="723" y="78" width="1" height="1" fill="#9cdcfe" fill-opacity="0.08"/><rect x="723" y="79" width="1" height="1" fill="#9cdcfe" fill-opacity="0.50"/><rect x="724" y="78" width="1" height="1" fill="#d4d4d4" fill-opacity="0.08"/><rect x="724" y="79" width="1" height="1" fill="#d4d4d4" fill-opacity="0.22"/><rect x="725" y="78" width="1" height="1" fill="#569cd6" fill-opacity="0.30"/><rect x="725" y="79" width="1" height="1" fill="#569cd6" fill-opacity="0.35"/><rect x="726" y="78" width="1" height="1" fill="#9cdcfe" fill-opacity="0.08"/><rect x="726" y="79" width="1" height="1" fill="#9cdcfe" fill-opacity="0.50"/><rect x="727" y="78" width="1" height="1" fill="#9cdcfe" fill-opacity="0.42"/><rect x="727" y="79" width="1" height="1" fill="#9cdcfe" fill-opacity="0.50"/><rect x="728" y="78" width="1" height="1" fill="#9cdcfe" fill-opacity="0.08"/><rect x="728" y="79" width="1" height="1" fill="#9cdcfe" fill-opacity="0.50"/><rect x="729" y="78" width="1" height="1" fill="#9cdcfe" fill-opacity="0.42"/><rect x="729" y="79" width="1" height="1" fill="#9cdcfe" fill-opacity="0.50"/><rect x="730" y="78" width="1" height="1" fill="#9cdcfe" fill-opacity="0.08"/><rect x="730" y="79" width="1" height="1" fill="#9cdcfe" fill-opacity="0.50"/><rect x="731" y="78" width="1" height="1" fill="#9cdcfe" fill-opacity="0.08"/><rect x="731" y="79" width="1" height="1" fill="#9cdcfe" fill-opacity="0.50"/><rect x="732" y="78" width="1" height="1" fill="#d4d4d4" fill-opacity="0.08"/><rect x="732" y="79" width="1" height="1" fill="#d4d4d4" fill-opacity="0.22"/><rect x="733" y="78" width="1" height="1" fill="#9cdcfe" fill-opacity="0.08"/><rect x="733" y="79" width="1" height="1" fill="#9cdcfe" fill-opacity="0.50"/><rect x="734" y="78" width="1" height="1" fill="#9cdcfe" fill-opacity="0.08"/><rect x="734" y="79" width="1" height="1" fill="#9cdcfe" fill-opacity="0.50"/><rect x="735" y="78" width="1" height="1" fill="#9cdcfe" fill-opacity="0.08"/><rect x="735" y="79" width="1" height="1" fill="#9cdcfe" fill-opacity="0.50"/><rect x="736" y="78" width="1" height="1" fill="#9cdcfe" fill-opacity="0.42"/><rect x="736" y="79" width="1" height="1" fill="#9cdcfe" fill-opacity="0.50"/><rect x="737" y="78" width="1" height="1" fill="#9cdcfe" fill-opacity="0.08"/><rect x="737" y="79" width="1" height="1" fill="#9cdcfe" fill-opacity="0.50"/><rect x="738" y="78" width="1" height="1" fill="#9cdcfe" fill-opacity="0.42"/><rect x="738" y="79" width="1" height="1" fill="#9cdcfe" fill-opacity="0.50"/><rect x="739" y="78" width="1" height="1" fill="#9cdcfe" fill-opacity="0.08"/><rect x="739" y="79" width="1" height="1" fill="#9cdcfe" fill-opacity="0.50"/><rect x="740" y="78" width="1" height="1" fill="#9cdcfe" fill-opacity="0.08"/><rect x="740" y="79" width="1" height="1" fill="#9cdcfe" fill-opacity="0.50"/><rect x="741" y="78" width="1" height="1" fill="#9cdcfe" fill-opacity="0.08"/><rect x="741" y="79" width="1" height="1" fill="#9cdcfe" fill-opacity="0.50"/><rect x="742" y="78" width="1" height="1" fill="#569cd6" fill-opacity="0.30"/><rect x="742" y="79" width="1" height="1" fill="#569cd6" fill-opacity="0.35"/><rect x="743" y="78" width="1" height="1" fill="#808080" fill-opacity="0.08"/><rect x="743" y="79" width="1" height="1" fill="#808080" fill-opacity="0.22"/><rect x="715" y="80" width="1" height="1" fill="#808080" fill-opacity="0.08"/><rect x="715" y="81" width="1" height="1" fill="#808080" fill-opacity="0.22"/><rect x="716" y="80" width="1" height="1" fill="#4ec9b0" fill-opacity="0.42"/><rect x="716" y="81" width="1" height="1" fill="#4ec9b0" fill-opacity="0.50"/><rect x="717" y="80" width="1" height="1" fill="#4ec9b0" fill-opacity="0.08"/><rect x="717" y="81" width="1" height="1" fill="#4ec9b0" fill-opacity="0.50"/><rect x="718" y="80" width="1" height="1" fill="#4ec9b0" fill-opacity="0.08"/><rect x="718" y="81" width="1" height="1" fill="#4ec9b0" fill-opacity="0.50"/><rect x="719" y="80" width="1" height="1" fill="#4ec9b0" fill-opacity="0.42"/><rect x="719" y="81" width="1" height="1" fill="#4ec9b0" fill-opacity="0.50"/><rect x="720" y="80" width="1" height="1" fill="#808080" fill-opacity="0.08"/><rect x="720" y="81" width="1" height="1" fill="#808080" fill-opacity="0.22"/><rect x="721" y="80" width="1" height="1" fill="#d4d4d4" fill-opacity="0.42"/><rect x="721" y="81" width="1" height="1" fill="#d4d4d4" fill-opacity="0.50"/><rect x="722" y="80" width="1" height="1" fill="#d4d4d4" fill-opacity="0.08"/><rect x="722" y="81" width="1" height="1" fill="#d4d4d4" fill-opacity="0.50"/><rect x="723" y="80" width="1" height="1" fill="#d4d4d4" fill-opacity="0.42"/><rect x="723" y="81" width="1" height="1" fill="#d4d4d4" fill-opacity="0.50"/><rect x="724" y="80" width="1" height="1" fill="#d4d4d4" fill-opacity="0.42"/><rect x="724" y="81" width="1" height="1" fill="#d4d4d4" fill-opacity="0.50"/><rect x="725" y="80" width="1" height="1" fill="#d4d4d4" fill-opacity="0.08"/><rect x="725" y="81" width="1" height="1" fill="#d4d4d4" fill-opacity="0.50"/><rect x="727" y="80" width="1" height="1" fill="#d4d4d4" fill-opacity="0.42"/><rect x="727" y="81" width="1" height="1" fill="#d4d4d4" fill-opacity="0.50"/><rect x="728" y="80" width="1" height="1" fill="#d4d4d4" fill-opacity="0.42"/><rect x="728" y="81" width="1" height="1" fill="#d4d4d4" fill-opacity="0.50"/><rect x="729" y="80" width="1" height="1" fill="#d4d4d4" fill-opacity="0.08"/><rect x="729" y="81" width="1" height="1" fill="#d4d4d4" fill-opacity="0.50"/><rect x="730" y="80" width="1" height="1" fill="#d4d4d4" fill-opacity="0.08"/><rect x="730" y="81" width="1" height="1" fill="#d4d4d4" fill-opacity="0.50"/><rect x="731" y="80" width="1" height="1" fill="#d4d4d4" fill-opacity="0.08"/><rect x="731" y="81" width="1" height="1" fill="#d4d4d4" fill-opacity="0.50"/><rect x="732" y="80" width="1" height="1" fill="#d4d4d4" fill-opacity="0.08"/><rect x="732" y="81" width="1" height="1" fill="#d4d4d4" fill-opacity="0.50"/><rect x="733" y="80" width="1" height="1" fill="#d4d4d4" fill-opacity="0.08"/><rect x="733" y="81" width="1" height="1" fill="#d4d4d4" fill-opacity="0.50"/><rect x="734" y="80" width="1" height="1" fill="#808080" fill-opacity="0.08"/><rect x="734" y="81" width="1" height="1" fill="#808080" fill-opacity="0.22"/><rect x="735" y="80" width="1" height="1" fill="#808080" fill-opacity="0.08"/><rect x="735" y="81" width="1" height="1" fill="#808080" fill-opacity="0.22"/><rect x="736" y="80" width="1" height="1" fill="#4ec9b0" fill-opacity="0.42"/><rect x="736" y="81" width="1" height="1" fill="#4ec9b0" fill-opacity="0.50"/><rect x="737" y="80" width="1" height="1" fill="#4ec9b0" fill-opacity="0.08"/><rect x="737" y="81" width="1" height="1" fill="#4ec9b0" fill-opacity="0.50"/><rect x="738" y="80" width="1" height="1" fill="#4ec9b0" fill-opacity="0.08"/><rect x="738" y="81" width="1" height="1" fill="#4ec9b0" fill-opacity="0.50"/><rect x="739" y="80" width="1" height="1" fill="#4ec9b0" fill-opacity="0.42"/><rect x="739" y="81" width="1" height="1" fill="#4ec9b0" fill-opacity="0.50"/><rect x="740" y="80" width="1" height="1" fill="#808080" fill-opacity="0.08"/><rect x="740" y="81" width="1" height="1" fill="#808080" fill-opacity="0.22"/><rect x="713" y="82" width="1" height="1" fill="#808080" fill-opacity="0.08"/><rect x="713" y="83" width="1" height="1" fill="#808080" fill-opacity="0.22"/><rect x="714" y="82" width="1" height="1" fill="#808080" fill-opacity="0.08"/><rect x="714" y="83" width="1" height="1" fill="#808080" fill-opacity="0.22"/><rect x="715" y="82" width="1" height="1" fill="#4ec9b0" fill-opacity="0.42"/><rect x="715" y="83" width="1" height="1" fill="#4ec9b0" fill-opacity="0.50"/><rect x="716" y="82" width="1" height="1" fill="#4ec9b0" fill-opacity="0.42"/><rect x="716" y="83" width="1" height="1" fill="#4ec9b0" fill-opacity="0.50"/><rect x="717" y="82" width="1" height="1" fill="#4ec9b0" fill-opacity="0.08"/><rect x="717" y="83" width="1" height="1" fill="#4ec9b0" fill-opacity="0.50"/><rect x="718" y="82" width="1" height="1" fill="#4ec9b0" fill-opacity="0.08"/><rect x="718" y="83" width="1" height="1" fill="#4ec9b0" fill-opacity="0.50"/><rect x="719" y="82" width="1" height="1" fill="#808080" fill-opacity="0.08"/><rect x="719" y="83" width="1" height="1" fill="#808080" fill-opacity="0.22"/><rect x="711" y="84" width="1" height="1" fill="#d4d4d4" fill-opacity="0.30"/><rect x="711" y="85" width="1" height="1" fill="#d4d4d4" fill-opacity="0.35"/><rect x="712" y="84" width="1" height="1" fill="#d4d4d4" fill-opacity="0.08"/><rect x="712" y="85" width="1" height="1" fill="#d4d4d4" fill-opacity="0.22"/><rect x="709" y="86" width="1" height="1" fill="#d4d4d4" fill-opacity="0.30"/><rect x="709" y="87" width="1" height="1" fill="#d4d4d4" fill-opacity="0.35"/><rect x="707" y="88" width="1" height="1" fill="#d4d4d4" fill-opacity="0.30"/><rect x="707" y="89" width="1" height="1" fill="#d4d4d4" fill-opacity="0.35"/><rect x="707" y="92" width="1" height="1" fill="#569cd6" fill-opacity="0.08"/><rect x="707" y="93" width="1" height="1" fill="#569cd6" fill-opacity="0.50"/><rect x="708" y="92" width="1" height="1" fill="#569cd6" fill-opacity="0.08"/><rect x="708" y="93" width="1" height="1" fill="#569cd6" fill-opacity="0.50"/><rect x="709" y="92" width="1" height="1" fill="#569cd6" fill-opacity="0.08"/><rect x="709" y="93" width="1" height="1" fill="#569cd6" fill-opacity="0.50"/><rect x="710" y="92" width="1" height="1" fill="#569cd6" fill-opacity="0.08"/><rect x="710" y="93" width="1" height="1" fill="#569cd6" fill-opacity="0.50"/><rect x="711" y="92" width="1" height="1" fill="#569cd6" fill-opacity="0.42"/><rect x="711" y="93" width="1" height="1" fill="#569cd6" fill-opacity="0.50"/><rect x="713" y="92" width="1" height="1" fill="#9cdcfe" fill-opacity="0.08"/><rect x="713" y="93" width="1" height="1" fill="#9cdcfe" fill-opacity="0.50"/><rect x="714" y="92" width="1" height="1" fill="#9cdcfe" fill-opacity="0.42"/><rect x="714" y="93" width="1" height="1" fill="#9cdcfe" fill-opacity="0.50"/><rect x="715" y="92" width="1" height="1" fill="#9cdcfe" fill-opacity="0.08"/><rect x="715" y="93" width="1" height="1" fill="#9cdcfe" fill-opacity="0.50"/><rect x="716" y="92" width="1" height="1" fill="#9cdcfe" fill-opacity="0.42"/><rect x="716" y="93" width="1" height="1" fill="#9cdcfe" fill-opacity="0.50"/><rect x="717" y="92" width="1" height="1" fill="#9cdcfe" fill-opacity="0.08"/><rect x="717" y="93" width="1" height="1" fill="#9cdcfe" fill-opacity="0.50"/><rect x="718" y="92" width="1" height="1" fill="#9cdcfe" fill-opacity="0.08"/><rect x="718" y="93" width="1" height="1" fill="#9cdcfe" fill-opacity="0.50"/><rect x="720" y="92" width="1" height="1" fill="#d4d4d4" fill-opacity="0.08"/><rect x="720" y="93" width="1" height="1" fill="#d4d4d4" fill-opacity="0.22"/><rect x="722" y="92" width="1" height="1" fill="#9cdcfe" fill-opacity="0.42"/><rect x="722" y="93" width="1" height="1" fill="#9cdcfe" fill-opacity="0.50"/><rect x="723" y="92" width="1" height="1" fill="#9cdcfe" fill-opacity="0.42"/><rect x="723" y="93" width="1" height="1" fill="#9cdcfe" fill-opacity="0.50"/><rect x="724" y="92" width="1" height="1" fill="#9cdcfe" fill-opacity="0.08"/><rect x="724" y="93" width="1" height="1" fill="#9cdcfe" fill-opacity="0.50"/><rect x="725" y="92" width="1" height="1" fill="#9cdcfe" fill-opacity="0.42"/><rect x="725" y="93" width="1" height="1" fill="#9cdcfe" fill-opacity="0.50"/><rect x="726" y="92" width="1" height="1" fill="#9cdcfe" fill-opacity="0.08"/><rect x="726" y="93" width="1" height="1" fill="#9cdcfe" fill-opacity="0.50"/><rect x="727" y="92" width="1" height="1" fill="#9cdcfe" fill-opacity="0.42"/><rect x="727" y="93" width="1" height="1" fill="#9cdcfe" fill-opacity="0.50"/><rect x="728" y="92" width="1" height="1" fill="#9cdcfe" fill-opacity="0.42"/><rect x="728" y="93" width="1" height="1" fill="#9cdcfe" fill-opacity="0.50"/><rect x="729" y="92" width="1" height="1" fill="#9cdcfe" fill-opacity="0.08"/><rect x="729" y="93" width="1" height="1" fill="#9cdcfe" fill-opacity="0.50"/><rect x="730" y="92" width="1" height="1" fill="#9cdcfe" fill-opacity="0.08"/><rect x="730" y="93" width="1" height="1" fill="#9cdcfe" fill-opacity="0.50"/><rect x="731" y="92" width="1" height="1" fill="#9cdcfe" fill-opacity="0.42"/><rect x="731" y="93" width="1" height="1" fill="#9cdcfe" fill-opacity="0.50"/><rect x="732" y="92" width="1" height="1" fill="#d4d4d4" fill-opacity="0.08"/><rect x="732" y="93" width="1" height="1" fill="#d4d4d4" fill-opacity="0.22"/><rect x="733" y="92" width="1" height="1" fill="#dcdcaa" fill-opacity="0.08"/><rect x="733" y="93" width="1" height="1" fill="#dcdcaa" fill-opacity="0.50"/><rect x="734" y="92" width="1" height="1" fill="#dcdcaa" fill-opacity="0.08"/><rect x="734" y="93" width="1" height="1" fill="#dcdcaa" fill-opacity="0.50"/><rect x="735" y="92" width="1" height="1" fill="#dcdcaa" fill-opacity="0.08"/><rect x="735" y="93" width="1" height="1" fill="#dcdcaa" fill-opacity="0.50"/><rect x="736" y="92" width="1" height="1" fill="#dcdcaa" fill-opacity="0.08"/><rect x="736" y="93" width="1" height="1" fill="#dcdcaa" fill-opacity="0.50"/><rect x="737" y="92" width="1" height="1" fill="#dcdcaa" fill-opacity="0.42"/><rect x="737" y="93" width="1" height="1" fill="#dcdcaa" fill-opacity="0.50"/><rect x="738" y="92" width="1" height="1" fill="#dcdcaa" fill-opacity="0.08"/><rect x="738" y="93" width="1" height="1" fill="#dcdcaa" fill-opacity="0.50"/><rect x="739" y="92" width="1" height="1" fill="#d4d4d4" fill-opacity="0.30"/><rect x="739" y="93" width="1" height="1" fill="#d4d4d4" fill-opacity="0.35"/><rect x="740" y="92" width="1" height="1" fill="#d4d4d4" fill-opacity="0.30"/><rect x="740" y="93" width="1" height="1" fill="#d4d4d4" fill-opacity="0.35"/><rect x="709" y="94" width="1" height="1" fill="#9cdcfe" fill-opacity="0.08"/><rect x="709" y="95" width="1" height="1" fill="#9cdcfe" fill-opacity="0.50"/><rect x="710" y="94" width="1" height="1" fill="#9cdcfe" fill-opacity="0.08"/><rect x="710" y="95" width="1" height="1" fill="#9cdcfe" fill-opacity="0.50"/><rect x="711" y="94" width="1" height="1" fill="#9cdcfe" fill-opacity="0.08"/><rect x="711" y="95" width="1" height="1" fill="#9cdcfe" fill-opacity="0.50"/><rect x="712" y="94" width="1" height="1" fill="#9cdcfe" fill-opacity="0.42"/><rect x="712" y="95" width="1" height="1" fill="#9cdcfe" fill-opacity="0.50"/><rect x="713" y="94" width="1" height="1" fill="#9cdcfe" fill-opacity="0.08"/><rect x="713" y="95" width="1" height="1" fill="#9cdcfe" fill-opacity="0.50"/><rect x="714" y="94" width="1" height="1" fill="#9cdcfe" fill-opacity="0.42"/><rect x="714" y="95" width="1" height="1" fill="#9cdcfe" fill-opacity="0.50"/><rect x="715" y="94" width="1" height="1" fill="#9cdcfe" fill-opacity="0.08"/><rect x="715" y="95" width="1" height="1" fill="#9cdcfe" fill-opacity="0.50"/><rect x="716" y="94" width="1" height="1" fill="#9cdcfe" fill-opacity="0.08"/><rect x="716" y="95" width="1" height="1" fill="#9cdcfe" fill-opacity="0.50"/><rect x="717" y="94" width="1" height="1" fill="#9cdcfe" fill-opacity="0.08"/><rect x="717" y="95" width="1" height="1" fill="#9cdcfe" fill-opacity="0.50"/><rect x="718" y="94" width="1" height="1" fill="#d4d4d4" fill-opacity="0.08"/><rect x="718" y="95" width="1" height="1" fill="#d4d4d4" fill-opacity="0.22"/><rect x="720" y="94" width="1" height="1" fill="#d4d4d4" fill-opacity="0.30"/><rect x="720" y="95" width="1" height="1" fill="#d4d4d4" fill-opacity="0.35"/><rect x="711" y="96" width="1" height="1" fill="#9cdcfe" fill-opacity="0.42"/><rect x="711" y="97" width="1" height="1" fill="#9cdcfe" fill-opacity="0.50"/><rect x="712" y="96" width="1" height="1" fill="#9cdcfe" fill-opacity="0.42"/><rect x="712" y="97" width="1" height="1" fill="#9cdcfe" fill-opacity="0.50"/><rect x="713" y="96" width="1" height="1" fill="#9cdcfe" fill-opacity="0.08"/><rect x="713" y="97" width="1" height="1" fill="#9cdcfe" fill-opacity="0.50"/><rect x="714" y="96" width="1" height="1" fill="#9cdcfe" fill-opacity="0.08"/><rect x="714" y="97" width="1" height="1" fill="#9cdcfe" fill-opacity="0.50"/><rect x="715" y="96" width="1" height="1" fill="#d4d4d4" fill-opacity="0.08"/><rect x="715" y="97" width="1" height="1" fill="#d4d4d4" fill-opacity="0.22"/><rect x="717" y="96" width="1" height="1" fill="#b5cea8" fill-opacity="0.42"/><rect x="717" y="97" width="1" height="1" fill="#b5cea8" fill-opacity="0.50"/><rect x="718" y="96" width="1" height="1" fill="#d4d4d4" fill-opacity="0.08"/><rect x="718" y="97" width="1" height="1" fill="#d4d4d4" fill-opacity="0.22"/><rect x="711" y="98" width="1" height="1" fill="#9cdcfe" fill-opacity="0.42"/><rect x="711" y="99" width="1" height="1" fill="#9cdcfe" fill-opacity="0.50"/><rect x="712" y="98" width="1" height="1" fill="#9cdcfe" fill-opacity="0.08"/><rect x="712" y="99" width="1" height="1" fill="#9cdcfe" fill-opacity="0.50"/><rect x="713" y="98" width="1" height="1" fill="#9cdcfe" fill-opacity="0.08"/><rect x="713" y="99" width="1" height="1" fill="#9cdcfe" fill-opacity="0.50"/><rect x="714" y="98" width="1" height="1" fill="#9cdcfe" fill-opacity="0.42"/><rect x="714" y="99" width="1" height="1" fill="#9cdcfe" fill-opacity="0.50"/><rect x="715" y="98" width="1" height="1" fill="#9cdcfe" fill-opacity="0.08"/><rect x="715" y="99" width="1" height="1" fill="#9cdcfe" fill-opacity="0.50"/><rect x="716" y="98" width="1" height="1" fill="#9cdcfe" fill-opacity="0.08"/><rect x="716" y="99" width="1" height="1" fill="#9cdcfe" fill-opacity="0.50"/><rect x="717" y="98" width="1" height="1" fill="#9cdcfe" fill-opacity="0.08"/><rect x="717" y="99" width="1" height="1" fill="#9cdcfe" fill-opacity="0.50"/><rect x="718" y="98" width="1" height="1" fill="#9cdcfe" fill-opacity="0.08"/><rect x="718" y="99" width="1" height="1" fill="#9cdcfe" fill-opacity="0.50"/><rect x="719" y="98" width="1" height="1" fill="#9cdcfe" fill-opacity="0.08"/><rect x="719" y="99" width="1" height="1" fill="#9cdcfe" fill-opacity="0.50"/><rect x="720" y="98" width="1" height="1" fill="#9cdcfe" fill-opacity="0.42"/><rect x="720" y="99" width="1" height="1" fill="#9cdcfe" fill-opacity="0.50"/><rect x="721" y="98" width="1" height="1" fill="#9cdcfe" fill-opacity="0.42"/><rect x="721" y="99" width="1" height="1" fill="#9cdcfe" fill-opacity="0.50"/><rect x="722" y="98" width="1" height="1" fill="#9cdcfe" fill-opacity="0.08"/><rect x="722" y="99" width="1" height="1" fill="#9cdcfe" fill-opacity="0.50"/><rect x="723" y="98" width="1" height="1" fill="#9cdcfe" fill-opacity="0.42"/><rect x="723" y="99" width="1" height="1" fill="#9cdcfe" fill-opacity="0.50"/><rect x="724" y="98" width="1" height="1" fill="#9cdcfe" fill-opacity="0.08"/><rect x="724" y="99" width="1" height="1" fill="#9cdcfe" fill-opacity="0.50"/><rect x="725" y="98" width="1" height="1" fill="#9cdcfe" fill-opacity="0.08"/><rect x="725" y="99" width="1" height="1" fill="#9cdcfe" fill-opacity="0.50"/><rect x="726" y="98" width="1" height="1" fill="#d4d4d4" fill-opacity="0.08"/><rect x="726" y="99" width="1" height="1" fill="#d4d4d4" fill-opacity="0.22"/><rect x="728" y="98" width="1" height="1" fill="#ce9178" fill-opacity="0.30"/><rect x="728" y="99" width="1" height="1" fill="#ce9178" fill-opacity="0.22"/><rect x="729" y="98" width="1" height="1" fill="#ce9178" fill-opacity="0.30"/><rect x="729" y="99" width="1" height="1" fill="#ce9178" fill-opacity="0.35"/><rect x="730" y="98" width="1" height="1" fill="#ce9178" fill-opacity="0.42"/><rect x="730" y="99" width="1" height="1" fill="#ce9178" fill-opacity="0.50"/><rect x="731" y="98" width="1" height="1" fill="#ce9178" fill-opacity="0.42"/><rect x="731" y="99" width="1" height="1" fill="#ce9178" fill-opacity="0.50"/><rect x="732" y="98" width="1" height="1" fill="#ce9178" fill-opacity="0.42"/><rect x="732" y="99" width="1" height="1" fill="#ce9178" fill-opacity="0.50"/><rect x="733" y="98" width="1" height="1" fill="#ce9178" fill-opacity="0.30"/><rect x="733" y="99" width="1" height="1" fill="#ce9178" fill-opacity="0.22"/><rect x="734" y="98" width="1" height="1" fill="#d4d4d4" fill-opacity="0.08"/><rect x="734" y="99" width="1" height="1" fill="#d4d4d4" fill-opacity="0.22"/><rect x="711" y="100" width="1" height="1" fill="#9cdcfe" fill-opacity="0.08"/><rect x="711" y="101" width="1" height="1" fill="#9cdcfe" fill-opacity="0.50"/><rect x="712" y="100" width="1" height="1" fill="#9cdcfe" fill-opacity="0.42"/><rect x="712" y="101" width="1" height="1" fill="#9cdcfe" fill-opacity="0.50"/><rect x="713" y="100" width="1" height="1" fill="#9cdcfe" fill-opacity="0.42"/><rect x="713" y="101" width="1" height="1" fill="#9cdcfe" fill-opacity="0.50"/><rect x="714" y="100" width="1" height="1" fill="#9cdcfe" fill-opacity="0.08"/><rect x="714" y="101" width="1" height="1" fill="#9cdcfe" fill-opacity="0.50"/><rect x="715" y="100" width="1" height="1" fill="#9cdcfe" fill-opacity="0.08"/><rect x="715" y="101" width="1" height="1" fill="#9cdcfe" fill-opacity="0.50"/><rect x="716" y="100" width="1" height="1" fill="#9cdcfe" fill-opacity="0.42"/><rect x="716" y="101" width="1" height="1" fill="#9cdcfe" fill-opacity="0.50"/><rect x="717" y="100" width="1" height="1" fill="#9cdcfe" fill-opacity="0.42"/><rect x="717" y="101" width="1" height="1" fill="#9cdcfe" fill-opacity="0.50"/><rect x="718" y="100" width="1" height="1" fill="#9cdcfe" fill-opacity="0.08"/><rect x="718" y="101" width="1" height="1" fill="#9cdcfe" fill-opacity="0.50"/><rect x="719" y="100" width="1" height="1" fill="#9cdcfe" fill-opacity="0.08"/><rect x="719" y="101" width="1" height="1" fill="#9cdcfe" fill-opacity="0.50"/><rect x="720" y="100" width="1" height="1" fill="#9cdcfe" fill-opacity="0.08"/><rect x="720" y="101" width="1" height="1" fill="#9cdcfe" fill-opacity="0.50"/><rect x="721" y="100" width="1" height="1" fill="#d4d4d4" fill-opacity="0.08"/><rect x="721" y="101" width="1" height="1" fill="#d4d4d4" fill-opacity="0.22"/><rect x="723" y="100" width="1" height="1" fill="#ce9178" fill-opacity="0.30"/><rect x="723" y="101" width="1" height="1" fill="#ce9178" fill-opacity="0.22"/><rect x="724" y="100" width="1" height="1" fill="#ce9178" fill-opacity="0.08"/><rect x="724" y="101" width="1" height="1" fill="#ce9178" fill-opacity="0.50"/><rect x="725" y="100" width="1" height="1" fill="#ce9178" fill-opacity="0.08"/><rect x="725" y="101" width="1" height="1" fill="#ce9178" fill-opacity="0.50"/><rect x="726" y="100" width="1" height="1" fill="#ce9178" fill-opacity="0.08"/><rect x="726" y="101" width="1" height="1" fill="#ce9178" fill-opacity="0.50"/><rect x="727" y="100" width="1" height="1" fill="#ce9178" fill-opacity="0.42"/><rect x="727" y="101" width="1" height="1" fill="#ce9178" fill-opacity="0.50"/><rect x="728" y="100" width="1" height="1" fill="#ce9178" fill-opacity="0.08"/><rect x="728" y="101" width="1" height="1" fill="#ce9178" fill-opacity="0.50"/><rect x="729" y="100" width="1" height="1" fill="#ce9178" fill-opacity="0.08"/><rect x="729" y="101" width="1" height="1" fill="#ce9178" fill-opacity="0.50"/><rect x="730" y="100" width="1" height="1" fill="#ce9178" fill-opacity="0.30"/><rect x="730" y="101" width="1" height="1" fill="#ce9178" fill-opacity="0.22"/><rect x="731" y="100" width="1" height="1" fill="#d4d4d4" fill-opacity="0.08"/><rect x="731" y="101" width="1" height="1" fill="#d4d4d4" fill-opacity="0.22"/><rect x="711" y="102" width="1" height="1" fill="#9cdcfe" fill-opacity="0.08"/><rect x="711" y="103" width="1" height="1" fill="#9cdcfe" fill-opacity="0.50"/><rect x="712" y="102" width="1" height="1" fill="#9cdcfe" fill-opacity="0.08"/><rect x="712" y="103" width="1" height="1" fill="#9cdcfe" fill-opacity="0.50"/><rect x="713" y="102" width="1" height="1" fill="#9cdcfe" fill-opacity="0.08"/><rect x="713" y="103" width="1" height="1" fill="#9cdcfe" fill-opacity="0.50"/><rect x="714" y="102" width="1" height="1" fill="#9cdcfe" fill-opacity="0.42"/><rect x="714" y="103" width="1" height="1" fill="#9cdcfe" fill-opacity="0.50"/><rect x="715" y="102" width="1" height="1" fill="#9cdcfe" fill-opacity="0.42"/><rect x="715" y="103" width="1" height="1" fill="#9cdcfe" fill-opacity="0.50"/><rect x="716" y="102" width="1" height="1" fill="#9cdcfe" fill-opacity="0.42"/><rect x="716" y="103" width="1" height="1" fill="#9cdcfe" fill-opacity="0.50"/><rect x="717" y="102" width="1" height="1" fill="#9cdcfe" fill-opacity="0.08"/><rect x="717" y="103" width="1" height="1" fill="#9cdcfe" fill-opacity="0.50"/><rect x="718" y="102" width="1" height="1" fill="#9cdcfe" fill-opacity="0.42"/><rect x="718" y="103" width="1" height="1" fill="#9cdcfe" fill-opacity="0.50"/><rect x="719" y="102" width="1" height="1" fill="#9cdcfe" fill-opacity="0.08"/><rect x="719" y="103" width="1" height="1" fill="#9cdcfe" fill-opacity="0.50"/><rect x="720" y="102" width="1" height="1" fill="#9cdcfe" fill-opacity="0.08"/><rect x="720" y="103" width="1" height="1" fill="#9cdcfe" fill-opacity="0.50"/><rect x="721" y="102" width="1" height="1" fill="#9cdcfe" fill-opacity="0.42"/><rect x="721" y="103" width="1" height="1" fill="#9cdcfe" fill-opacity="0.50"/><rect x="722" y="102" width="1" height="1" fill="#9cdcfe" fill-opacity="0.08"/><rect x="722" y="103" width="1" height="1" fill="#9cdcfe" fill-opacity="0.50"/><rect x="723" y="102" width="1" height="1" fill="#9cdcfe" fill-opacity="0.08"/><rect x="723" y="103" width="1" height="1" fill="#9cdcfe" fill-opacity="0.50"/><rect x="724" y="102" width="1" height="1" fill="#9cdcfe" fill-opacity="0.42"/><rect x="724" y="103" width="1" height="1" fill="#9cdcfe" fill-opacity="0.50"/><rect x="725" y="102" width="1" height="1" fill="#d4d4d4" fill-opacity="0.08"/><rect x="725" y="103" width="1" height="1" fill="#d4d4d4" fill-opacity="0.22"/><rect x="727" y="102" width="1" height="1" fill="#ce9178" fill-opacity="0.30"/><rect x="727" y="103" width="1" height="1" fill="#ce9178" fill-opacity="0.22"/><rect x="728" y="102" width="1" height="1" fill="#ce9178" fill-opacity="0.08"/><rect x="728" y="103" width="1" height="1" fill="#ce9178" fill-opacity="0.50"/><rect x="729" y="102" width="1" height="1" fill="#ce9178" fill-opacity="0.08"/><rect x="729" y="103" width="1" height="1" fill="#ce9178" fill-opacity="0.50"/><rect x="730" y="102" width="1" height="1" fill="#ce9178" fill-opacity="0.08"/><rect x="730" y="103" width="1" height="1" fill="#ce9178" fill-opacity="0.50"/><rect x="731" y="102" width="1" height="1" fill="#ce9178" fill-opacity="0.42"/><rect x="731" y="103" width="1" height="1" fill="#ce9178" fill-opacity="0.50"/><rect x="732" y="102" width="1" height="1" fill="#ce9178" fill-opacity="0.08"/><rect x="732" y="103" width="1" height="1" fill="#ce9178" fill-opacity="0.50"/><rect x="733" y="102" width="1" height="1" fill="#ce9178" fill-opacity="0.08"/><rect x="733" y="103" width="1" height="1" fill="#ce9178" fill-opacity="0.50"/><rect x="734" y="102" width="1" height="1" fill="#ce9178" fill-opacity="0.30"/><rect x="734" y="103" width="1" height="1" fill="#ce9178" fill-opacity="0.22"/><rect x="735" y="102" width="1" height="1" fill="#d4d4d4" fill-opacity="0.08"/><rect x="735" y="103" width="1" height="1" fill="#d4d4d4" fill-opacity="0.22"/><rect x="709" y="104" width="1" height="1" fill="#d4d4d4" fill-opacity="0.30"/><rect x="709" y="105" width="1" height="1" fill="#d4d4d4" fill-opacity="0.35"/><rect x="710" y="104" width="1" height="1" fill="#d4d4d4" fill-opacity="0.08"/><rect x="710" y="105" width="1" height="1" fill="#d4d4d4" fill-opacity="0.22"/><rect x="707" y="106" width="1" height="1" fill="#d4d4d4" fill-opacity="0.30"/><rect x="707" y="107" width="1" height="1" fill="#d4d4d4" fill-opacity="0.35"/><rect x="708" y="106" width="1" height="1" fill="#d4d4d4" fill-opacity="0.30"/><rect x="708" y="107" width="1" height="1" fill="#d4d4d4" fill-opacity="0.35"/><rect x="709" y="106" width="1" height="1" fill="#d4d4d4" fill-opacity="0.08"/><rect x="709" y="107" width="1" height="1" fill="#d4d4d4" fill-opacity="0.22"/></svg>
<div id="cursor"></div>
<div style="position:absolute;left:783px;top:66px;width:1px;height:494px;background:#3a3a3a"></div>
<div style="position:absolute;left:784px;top:138.5px;width:8px;height:2px;background:#a0a0a0"></div>
<div style="position:absolute;left:788px;top:139px;width:4px;height:11px;background:#b0b0b0"></div>
<div id="status">
<svg style="position:absolute;left:0;top:0" width="792" height="21" viewBox="0 0 792 21">
  <g fill="none" stroke="#ffffff" stroke-width="1.4">
    <circle cx="11.4" cy="6.9" r="1.5"/>
    <circle cx="16.9" cy="8.7" r="1.5"/>
    <circle cx="11.4" cy="16.1" r="1.5"/>
    <path d="M11.4 8.4 V14.6" stroke-width="1.9"/>
    <path d="M16.9 10.2 Q16.9 13.2 11.6 14.3" stroke-width="1.7"/>
  </g>
  <circle cx="41.5" cy="11.5" r="5.6" fill="#ffffff"/>
  <path d="M39.3 9.3 L43.7 13.7 M43.7 9.3 L39.3 13.7" stroke="#68217a" stroke-width="1.6"/>
  <path d="M68.6 6.4 L73.7 16.3 H63.5 Z" fill="#ffffff" stroke="#ffffff" stroke-width="0.8" stroke-linejoin="round"/>
  <rect x="67.9" y="9.2" width="1.4" height="3.8" fill="#68217a"/>
  <rect x="67.9" y="13.8" width="1.4" height="1.4" fill="#68217a"/>
  <circle cx="735.2" cy="11.4" r="6.1" fill="none" stroke="#ffffff" stroke-width="1.9"/>
  <circle cx="732.8" cy="9.1" r="1.1" fill="#ffffff"/>
  <circle cx="737.6" cy="9.1" r="1.1" fill="#ffffff"/>
  <path d="M731.8 12.4 Q735.2 15.8 738.6 12.4" fill="none" stroke="#ffffff" stroke-width="1.6"/>
  <path d="M780.3 7.2 V15.7 M777 9.4 L780.3 7.4" fill="none" stroke="#ffffff" stroke-width="1.4"/>
  <path d="M765.2 5 Q769.4 5 769.6 10.5 Q769.8 13.6 772 15.2 V15.8 H758.4 V15.2 Q760.6 13.6 760.8 10.5 Q761 5 765.2 5 Z" fill="#ffffff"/>
  <circle cx="765.2" cy="17.6" r="1.5" fill="#ffffff"/>
</svg>
  <div class="st" style="left:445px;letter-spacing:-0.25px">Ln 8, Col 28</div>
  <div class="st" style="left:521.5px;letter-spacing:-0.5px">Spaces: 2</div>
  <div class="st" style="left:585px;letter-spacing:-0.45px">UTF-8</div>
  <div class="st" style="left:632px;letter-spacing:-1.2px">LF</div>
  <div class="st" style="left:659.5px;letter-spacing:-0.4px">JavaScript</div>
  <div class="st" style="left:51px">0</div>
  <div class="st" style="left:77.5px">0</div>
</div>
</body></html>
